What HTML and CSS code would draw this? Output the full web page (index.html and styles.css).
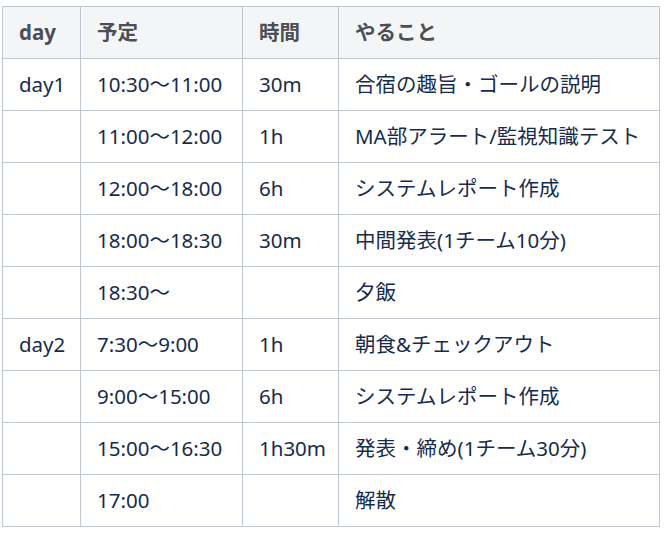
FILE: index.html
```html
<!DOCTYPE html>
<html lang="ja">
<head>
<meta charset="utf-8">
<link rel="stylesheet" href="styles.css">
</head>
<body>
<div class="wrap">
<table class="sched">
<colgroup>
<col class="c-day"><col class="c-plan"><col class="c-time"><col class="c-todo">
</colgroup>
<thead>
<tr><th>day</th><th>予定</th><th>時間</th><th>やること</th></tr>
</thead>
<tbody>
<tr><td>day1</td><td>10:30〜11:00</td><td>30m</td><td>合宿の趣旨・ゴールの説明</td></tr>
<tr><td></td><td>11:00〜12:00</td><td>1h</td><td>MA部アラート/監視知識テスト</td></tr>
<tr><td></td><td>12:00〜18:00</td><td>6h</td><td>システムレポート作成</td></tr>
<tr><td></td><td>18:00〜18:30</td><td>30m</td><td>中間発表(1チーム10分)</td></tr>
<tr><td></td><td>18:30〜</td><td></td><td>夕飯</td></tr>
<tr><td>day2</td><td>7:30〜9:00</td><td>1h</td><td>朝食&amp;チェックアウト</td></tr>
<tr><td></td><td>9:00〜15:00</td><td>6h</td><td>システムレポート作成</td></tr>
<tr><td></td><td>15:00〜16:30</td><td>1h30m</td><td>発表・締め(1チーム30分)</td></tr>
<tr><td></td><td>17:00</td><td></td><td>解散</td></tr>
</tbody>
</table>
</div>
</body>
</html>
```
FILE: styles.css
```css
html, body {
  margin: 0;
  padding: 0;
  background: #ffffff;
}
.wrap {
  padding: 6px 0 0 2px;
}
.sched {
  border-collapse: collapse;
  table-layout: fixed;
  width: 657px;
  font-family: "Noto Sans", "Noto Sans CJK JP", sans-serif;
  font-size: 20.5px;
  color: #172b4d;
}
.c-day { width: 78px; }
.c-plan { width: 162px; }
.c-time { width: 96px; }
.c-todo { width: 321px; }
.sched th,
.sched td {
  border: 1px solid #c1c7d0;
  padding: 11px 16px;
  line-height: 29px;
  height: 29px;
  text-align: left;
  vertical-align: middle;
  white-space: nowrap;
  box-sizing: content-box;
}
.sched th {
  background: #f4f5f7;
  color: #4c4f55;
  font-weight: 700;
}
.sched td {
  font-weight: 400;
}
```
